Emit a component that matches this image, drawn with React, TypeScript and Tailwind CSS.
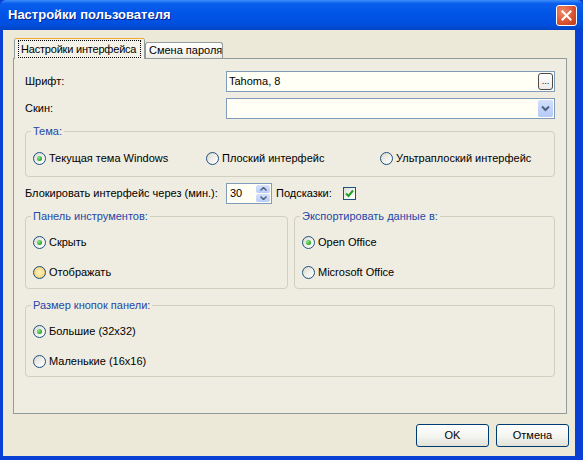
import React from "react";

// ─────────────────────────────────────────────────────────────────────────────
// Small XP-style controls
// ─────────────────────────────────────────────────────────────────────────────

function Radio({
  label,
  checked = false,
  hot = false,
}: {
  label: string;
  checked?: boolean;
  hot?: boolean;
}) {
  return (
    <div className="flex items-center h-[14px]">
      <span
        className={
          "flex items-center justify-center w-[13px] h-[13px] rounded-full border border-[#1c5180] shrink-0 " +
          (hot
            ? "bg-[radial-gradient(circle,#fff3c4_0%,#f9dd8c_55%,#e9b848_100%)]"
            : "bg-[linear-gradient(135deg,#d8d8d0_0%,#f0f0ea_50%,#ffffff_100%)]")
        }
      >
        {checked && (
          <span className="w-[5px] h-[5px] rounded-full bg-[radial-gradient(circle_at_35%_35%,#8fe88c_0%,#21a121_75%)]" />
        )}
      </span>
      <span className="ml-[3px] whitespace-nowrap">{label}</span>
    </div>
  );
}

function Group({
  title,
  className,
  children,
}: {
  title: string;
  className?: string;
  children: React.ReactNode;
}) {
  return (
    <fieldset
      className={"rounded-[4px] border border-[#d0d0bf] px-[7px] " + (className || "")}
    >
      <legend className="-ml-[2px] px-[2px] leading-[13px] text-[#2448a8]">
        {title}
      </legend>
      {children}
    </fieldset>
  );
}

function XpButton({ children }: { children: React.ReactNode }) {
  return (
    <button className="w-[73px] h-[23px] rounded-[3px] border border-[#003c74] bg-[linear-gradient(180deg,#ffffff_0%,#f4f4f0_55%,#e2e1d9_100%)] text-black">
      {children}
    </button>
  );
}

// ─────────────────────────────────────────────────────────────────────────────
// Main dialog
// ─────────────────────────────────────────────────────────────────────────────

export default function App() {
  return (
    <div className="w-[583px] h-[460px] flex flex-col bg-[#0840d6] text-[11px] text-black font-['Liberation_Sans','DejaVu_Sans',sans-serif] overflow-hidden">
      {/* Title bar */}
      <div className="h-[30px] shrink-0 flex items-center pl-[8px] pr-[6px] rounded-t-[6px] bg-[linear-gradient(180deg,#3d8ff8_0%,#0a5eee_12%,#0055e6_45%,#0050e0_80%,#0043c4_100%)]">
        <span className="text-white font-bold text-[13px] [text-shadow:1px_1px_#0a1f8a]">
          Настройки пользователя
        </span>
        <button className="ml-auto w-[21px] h-[21px] rounded-[3px] border border-white flex items-center justify-center bg-[radial-gradient(circle_at_30%_30%,#f08a6a_0%,#d9502f_60%,#b93a1e_100%)]">
          <svg width="11" height="11" viewBox="0 0 11 11">
            <path d="M1.5 1.5 L9.5 9.5 M9.5 1.5 L1.5 9.5" stroke="#fff" strokeWidth="2" strokeLinecap="square" />
          </svg>
        </button>
      </div>

      {/* Body */}
      <div className="flex-1 ml-[3px] mr-[8px] mb-[4px] bg-[#ece9d8] flex flex-col pt-[8px] pl-[10px]">
        {/* Tabs */}
        <div className="flex items-end h-[20px] pl-[1px]">
          <div className="relative z-10 h-[21px] -mb-px w-[131px] rounded-t-[3px] border-x border-[#919b9c] bg-[#f3f1e8] flex flex-col">
            <div className="h-[3px] rounded-t-[3px] bg-[linear-gradient(180deg,#e68b2c_0%,#ffc73c_100%)]" />
            <div className="flex-1 px-[3px] pb-[1px] pt-[1px]">
              <div className="h-full border border-dotted border-black flex items-center pl-[2px] whitespace-nowrap tracking-[-0.2px]">
                Настройки интерфейса
              </div>
            </div>
          </div>
          <div className="h-[16px] w-[78px] rounded-t-[3px] border-x border-t border-[#919b9c] bg-[linear-gradient(180deg,#ffffff_0%,#f6f5f0_60%,#ecebe4_100%)] flex items-center pl-[3px] whitespace-nowrap">
            Смена пароля
          </div>
        </div>

        {/* Tab page */}
        <div className="w-[554px] h-[356px] border border-[#919b9c] bg-[#efece1] pl-[11px] pt-[12px]">
          <div className="w-[530px] flex flex-col">
            {/* Font */}
            <div className="flex items-center h-[21px]">
              <span className="w-[201px]">Шрифт:</span>
              <div className="flex-1 h-[21px] border border-[#7f9db9] bg-[#fffff5] flex items-center pl-[2px] pr-px">
                <span className="flex-1">Tahoma, 8</span>
                <span className="w-[15px] h-[17px] rounded-[3px] border border-[#4a4a4a] bg-[linear-gradient(180deg,#ffffff,#ecebe6)] flex items-center justify-center text-[9px] leading-[9px]">
                  ...
                </span>
              </div>
            </div>

            {/* Skin */}
            <div className="flex items-center h-[21px] mt-[6px]">
              <span className="w-[201px]">Скин:</span>
              <div className="flex-1 h-[21px] border border-[#7f9db9] bg-[#fffff5] flex items-center justify-end pr-px">
                <span className="w-[15px] h-[17px] rounded-[2px] bg-[linear-gradient(180deg,#d3e0fc,#b5c9f7)] flex items-center justify-center">
                  <svg width="9" height="7" viewBox="0 0 9 7">
                    <path d="M1 1.5 L4.5 5 L8 1.5" fill="none" stroke="#4d6185" strokeWidth="2" />
                  </svg>
                </span>
              </div>
            </div>

            {/* Theme */}
            <Group title="Тема:" className="mt-[6px] pb-[11px]">
              <div className="mt-[13px] flex">
                <div className="w-[173px]">
                  <Radio label="Текущая тема Windows" checked />
                </div>
                <div className="w-[174px]">
                  <Radio label="Плоский интерфейс" />
                </div>
                <Radio label="Ультраплоский интерфейс" />
              </div>
            </Group>

            {/* Lock */}
            <div className="mt-[6px] flex items-center h-[21px]">
              <span className="w-[201px]">Блокировать интерфейс через (мин.):</span>
              <div className="w-[46px] h-[21px] border border-[#7f9db9] bg-[#fffff5] flex items-center pl-[3px] pr-px">
                <span className="flex-1">30</span>
                <div className="w-[14px] h-[17px] flex flex-col gap-px">
                  <span className="flex-1 rounded-[2px] bg-[linear-gradient(180deg,#d6e2fc,#b9cdf8)] flex items-center justify-center">
                    <svg width="7" height="4" viewBox="0 0 7 4">
                      <path d="M0.5 3.5 L3.5 0.5 L6.5 3.5" fill="none" stroke="#4d6185" strokeWidth="1.5" />
                    </svg>
                  </span>
                  <span className="flex-1 rounded-[2px] bg-[linear-gradient(180deg,#d6e2fc,#b9cdf8)] flex items-center justify-center">
                    <svg width="7" height="4" viewBox="0 0 7 4">
                      <path d="M0.5 0.5 L3.5 3.5 L6.5 0.5" fill="none" stroke="#4d6185" strokeWidth="1.5" />
                    </svg>
                  </span>
                </div>
              </div>
              <span className="ml-[4px] w-[67px]">Подсказки:</span>
              <span className="w-[13px] h-[13px] border border-[#1c5180] bg-[linear-gradient(135deg,#dcdcd6_0%,#f4f4f0_50%,#ffffff_100%)] flex items-center justify-center">
                <svg width="9" height="9" viewBox="0 0 9 9">
                  <path d="M1 4.5 L3.5 7 L8 1.5" fill="none" stroke="#21a121" strokeWidth="2" />
                </svg>
              </span>
            </div>

            {/* Toolbar / export */}
            <div className="mt-[6px] flex gap-[6px]">
              <Group title="Панель инструментов:" className="w-[263px] pb-[9px]">
                <div className="mt-[12px]">
                  <Radio label="Скрыть" checked />
                </div>
                <div className="mt-[16px]">
                  <Radio label="Отображать" hot />
                </div>
              </Group>
              <Group title="Экспортировать данные в:" className="w-[261px] pb-[9px]">
                <div className="mt-[12px]">
                  <Radio label="Open Office" checked />
                </div>
                <div className="mt-[16px]">
                  <Radio label="Microsoft Office" />
                </div>
              </Group>
            </div>

            {/* Button size */}
            <Group title="Размер кнопок панели:" className="mt-[10px] pb-[8px]">
              <div className="mt-[12px]">
                <Radio label="Большие (32x32)" checked />
              </div>
              <div className="mt-[16px]">
                <Radio label="Маленькие (16x16)" />
              </div>
            </Group>
          </div>
        </div>

        {/* Dialog buttons */}
        <div className="mt-[10px] flex justify-end gap-[7px] pr-[6px]">
          <XpButton>OK</XpButton>
          <XpButton>Отмена</XpButton>
        </div>
      </div>
    </div>
  );
}
